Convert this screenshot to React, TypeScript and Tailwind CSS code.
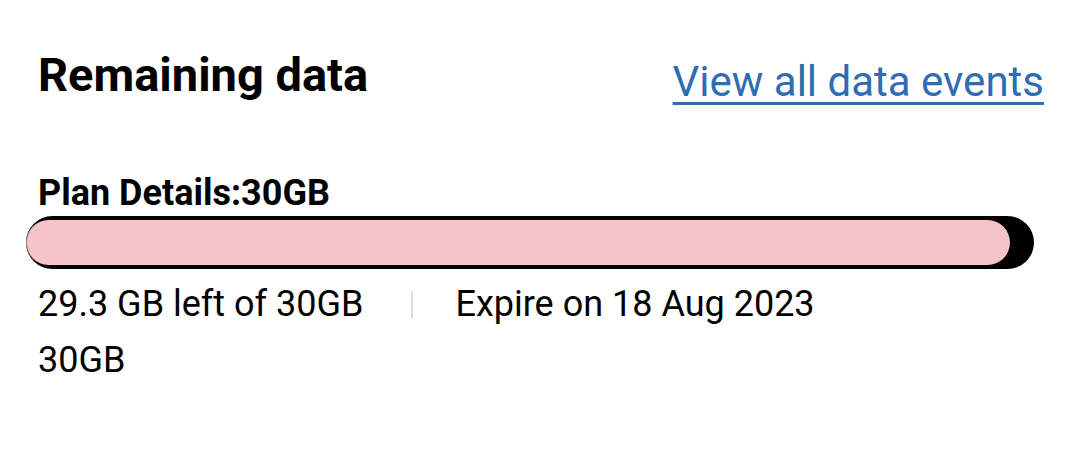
export default function App() {
  const used = 29.3;
  const total = 30;
  const pct = (used / total) * 100;

  return (
    <div className="w-[1080px] h-[451px] bg-white text-black font-['Roboto',sans-serif]">
      <div className="flex items-start justify-between pl-[38px] pr-[36px] pt-[47px]">
        <h2 className="text-[47px] font-bold leading-[56px]">Remaining data</h2>
        <a href="#" className="mt-[7px] text-[42px] leading-[56px] text-[#2f6db3] underline decoration-[3px] underline-offset-[6px]">
          View all data events
        </a>
      </div>

      <div className="mt-[63px] pl-[26px] pr-[46px]">
        <div className="pl-[12px] text-[36px] font-bold leading-[40px]">Plan Details:30GB</div>
        <div className="mt-[3px] h-[53px] rounded-full bg-black flex items-center">
          <div
            className="h-[45px] rounded-full bg-[#f4c4c7] border-l border-[#9a8a8a]"
            style={{ width: `${pct}%` }}
          />
        </div>
      </div>

      <div className="pl-[38px] mt-[7px] flex items-center text-[36px] leading-[56px]">
        <span>29.3 GB left of 30GB</span>
        <span className="ml-[48px] mr-[42px] w-[2px] h-[27px] bg-[#dcdcdc]" />
        <span>Expire on 18 Aug 2023</span>
      </div>
      <div className="pl-[38px] text-[36px] leading-[56px]">30GB</div>
    </div>
  );
}
